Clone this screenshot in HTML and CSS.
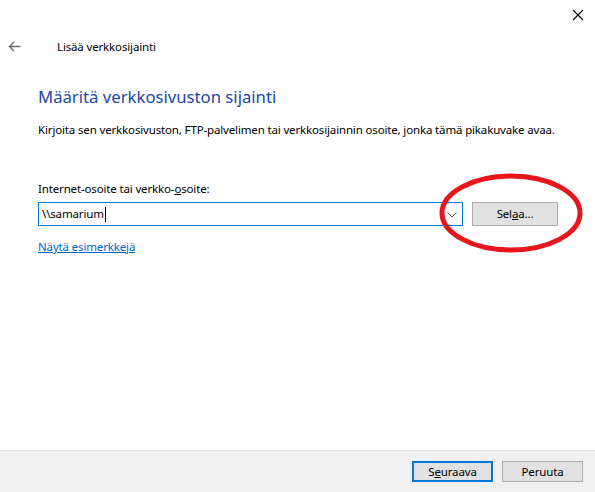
FILE: index.html
```html
<!DOCTYPE html>
<html lang="fi">
<head>
<meta charset="utf-8">
<title>Lisää verkkosijainti</title>
<link rel="stylesheet" href="styles.css">
</head>
<body>
<div class="window">
  <div class="titlebar">
    <svg class="close" width="12" height="12" viewBox="0 0 12 12"><path d="M1 1 L11 11 M11 1 L1 11" stroke="#000" stroke-width="1.1" fill="none"/></svg>
  </div>
  <div class="header">
    <svg class="back" width="13" height="11" viewBox="0 0 13 11"><path d="M12.5 5.5 H1.5 M6 1 L1.5 5.5 L6 10" stroke="#6b6b6b" stroke-width="1.4" fill="none"/></svg>
    <span class="header-title">Lisää verkkosijainti</span>
  </div>
  <div class="content">
    <h1 class="heading">Määritä verkkosivuston sijainti</h1>
    <p class="desc">Kirjoita sen verkkosivuston, FTP-palvelimen tai verkkosijainnin osoite, jonka tämä pikakuvake avaa.</p>
    <div class="label">Internet-osoite tai verkko-<u>o</u>soite:</div>
    <div class="input-row">
      <div class="combo">
        <span class="combo-text">\\samarium</span><span class="caret"></span>
        <svg class="chevron" width="10" height="6" viewBox="0 0 10 6"><path d="M0.5 0.5 L5 5 L9.5 0.5" stroke="#555" stroke-width="1" fill="none"/></svg>
      </div>
      <div class="btn browse">Sel<u>a</u>a...</div>
      <svg class="ring" width="148" height="84" viewBox="0 0 148 84"><ellipse cx="74" cy="42" rx="69" ry="37" stroke="#e8151c" stroke-width="5" fill="none"/></svg>
    </div>
    <a class="link" href="#">Näytä esimerkkejä</a>
  </div>
  <div class="footer">
    <div class="btn primary">S<u>e</u>uraava</div>
    <div class="btn">Peruuta</div>
  </div>
</div>
</body>
</html>
```
FILE: styles.css
```css
html, body {
  margin: 0;
  padding: 0;
  background: #ffffff;
}
body {
  font-family: "Noto Sans", "Open Sans", sans-serif;
  font-size: 11.5px;
  letter-spacing: -0.15px;
  color: #000;
}
.window {
  width: 595px;
  height: 492px;
  display: flex;
  flex-direction: column;
  overflow: hidden;
}
.titlebar {
  height: 31px;
  display: flex;
  justify-content: flex-end;
  align-items: flex-start;
}
.close {
  margin: 9px 11px 0 0;
}
.header {
  height: 30px;
  display: flex;
  align-items: center;
}
.back {
  margin-left: 8px;
}
.header-title {
  margin-left: 36px;
}
.content {
  padding: 0 0 0 38px;
  flex: 1;
}
.heading {
  margin: 25px 0 0 0;
  font-size: 16.7px;
  letter-spacing: 0;
  font-weight: normal;
  line-height: 22px;
  color: #1a49a8;
}
.desc {
  margin: 14px 0 0 0;
  line-height: 16px;
}
.label {
  margin-top: 43px;
  line-height: 16px;
}
.input-row {
  margin-top: 5px;
  display: flex;
  align-items: center;
  position: relative;
  height: 24px;
}
.combo {
  width: 423px;
  height: 22px;
  border: 1px solid #0078d7;
  display: flex;
  align-items: center;
  position: relative;
}
.combo-text {
  margin-left: 3px;
  line-height: 16px;
}
.caret {
  width: 1px;
  height: 15px;
  background: #000;
  margin-left: 1px;
}
.chevron {
  position: absolute;
  right: 5px;
  top: 9px;
}
.btn {
  width: 84px;
  height: 22px;
  box-sizing: content-box;
  border: 1px solid #adadad;
  background: #e1e1e1;
  display: flex;
  align-items: center;
  justify-content: center;
  line-height: 16px;
}
.browse {
  margin-left: 9px;
}
.ring {
  position: absolute;
  left: 399px;
  top: -31px;
}
.link {
  display: inline-block;
  margin-top: 13px;
  color: #0066cc;
  text-decoration: underline;
  line-height: 16px;
}
.footer {
  height: 41px;
  border-top: 1px solid #dfdfdf;
  background: #f0f0f0;
  display: flex;
  justify-content: flex-end;
  align-items: flex-start;
  gap: 9px;
  padding-right: 12px;
}
.footer .btn {
  width: 79px;
  height: 19px;
  margin-top: 10px;
}
.footer .primary {
  border: 2px solid #0078d7;
  height: 17px;
  width: 77px;
}
```
